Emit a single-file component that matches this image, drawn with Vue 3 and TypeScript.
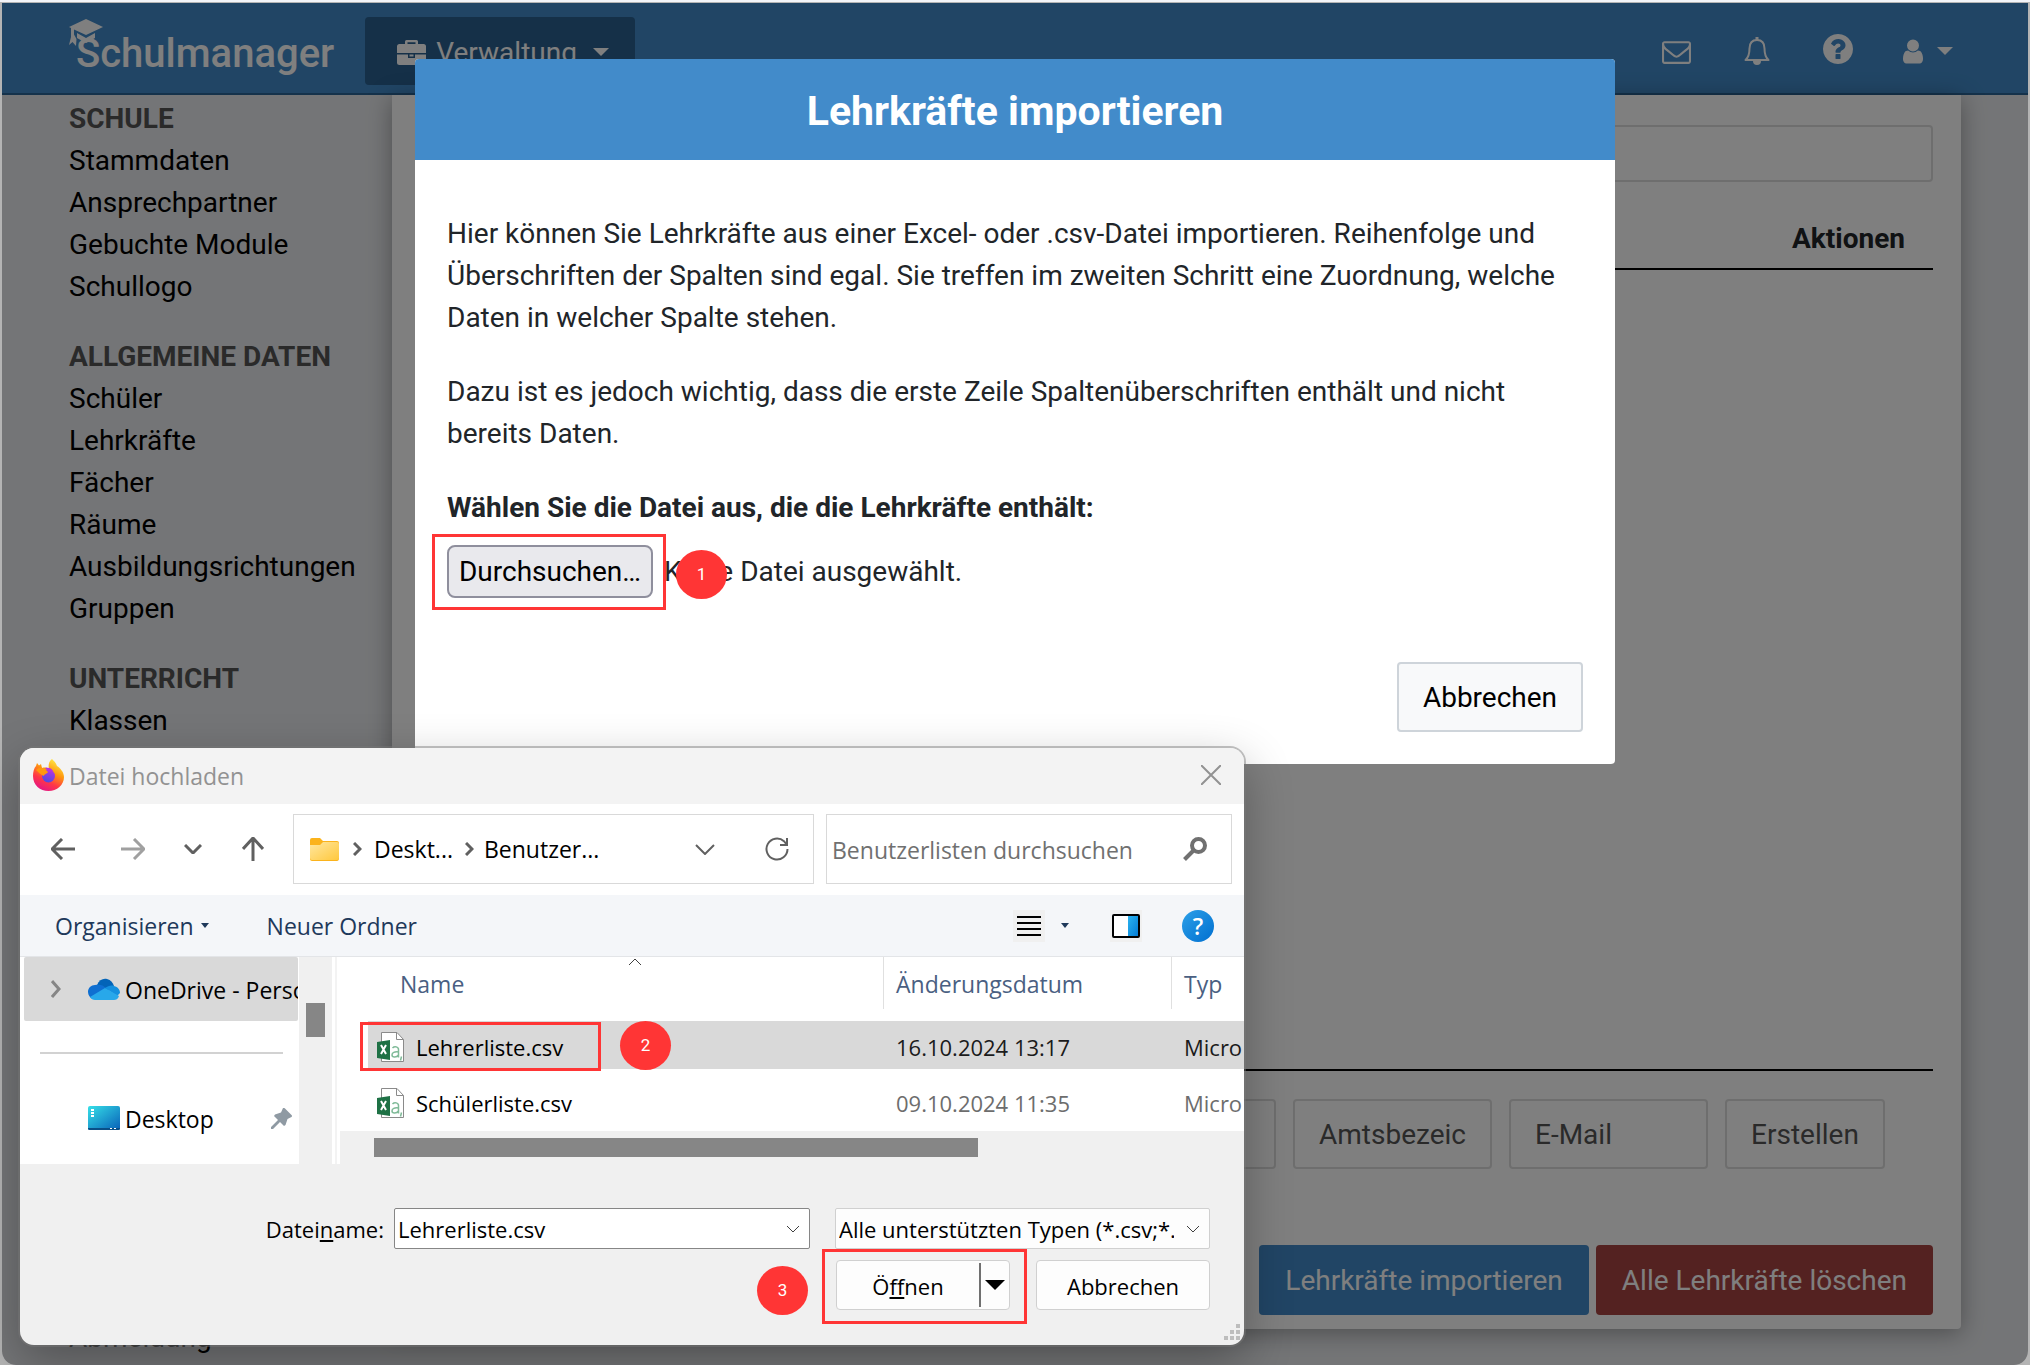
<script setup lang="ts">
import { ref } from 'vue'

interface NavGroup {
  title: string
  items: string[]
}

interface FileRow {
  name: string
  date: string
  type: string
}

const groups: NavGroup[] = [
  { title: 'SCHULE', items: ['Stammdaten', 'Ansprechpartner', 'Gebuchte Module', 'Schullogo'] },
  {
    title: 'ALLGEMEINE DATEN',
    items: ['Schüler', 'Lehrkräfte', 'Fächer', 'Räume', 'Ausbildungsrichtungen', 'Gruppen'],
  },
  { title: 'UNTERRICHT', items: ['Klassen'] },
]

const files: FileRow[] = [
  { name: 'Lehrerliste.csv', date: '16.10.2024 13:17', type: 'Micro' },
  { name: 'Schülerliste.csv', date: '09.10.2024 11:35', type: 'Micro' },
]

const selected = ref<string>('Lehrerliste.csv')
const filePicker = ref<HTMLInputElement | null>(null)
</script>

<template>
  <div class="frame">
    <div class="app">
      <header class="topbar">
        <a class="logo" href="#">
          <svg class="cap" viewBox="0 0 34 28" aria-hidden="true">
            <path d="M17 0 34 8 17 16 5 10.500v5l2.500 4.500L7 27l-3.500-4L0 26l2-8V9L0 8z" />
            <path d="M8 14l9 5 9-5v5l-9 5-9-5z" />
          </svg>
          <span>Schulmanager</span>
        </a>
        <button class="menu" type="button">
          <svg width="29" height="25" viewBox="0 0 29 25" aria-hidden="true">
            <path
              fill-rule="evenodd"
              d="M8 4V1.500Q8 0 9.500 0h10Q21 0 21 1.500V4h5.500Q29 4 29 6.500V13H0V6.500Q0 4 2.500 4zM10.500 4h8V2.200h-8zM0 14.500h11V18h7v-3.500h11v8Q29 25 26.500 25h-24Q0 25 0 22.500zM12.500 14.500h4v2h-4z"
            />
          </svg>
          <span>Verwaltung</span>
          <svg class="caret" width="16" height="8" viewBox="0 0 16 8" aria-hidden="true">
            <path d="M0 0h16L8 8z" />
          </svg>
        </button>
        <nav class="tools" aria-label="Konto">
          <a href="#" aria-label="Nachrichten">
            <svg width="29" height="29" viewBox="0 0 1792 1792">
              <path
                d="M1664 1504v-768q-32 36-69 66-268 206-426 338-51 43-83 67t-86.500 48.500-102.500 24.500h-2q-48 0-102.500-24.500t-86.500-48.500-83-67q-158-132-426-338-37-30-69-66v768q0 13 9.500 22.500t22.500 9.500h1472q13 0 22.500-9.500t9.500-22.500zm0-1051v-24.500l-.5-13-3-12.500-5.500-9-9-7.500-14-2.500h-1472q-13 0-22.500 9.500t-9.500 22.500q0 168 147 284 193 152 401 317 6 5 35 29.500t46 37.500 44.500 31.500 50.500 27.500 43 9h2q20 0 43-9t50.500-27.500 44.500-31.500 46-37.500 35-29.500q208-165 401-317 54-43 100.500-115.500t46.500-131.500zm128-37v1088q0 66-47 113t-113 47h-1472q-66 0-113-47t-47-113v-1088q0-66 47-113t113-47h1472q66 0 113 47t47 113z"
              />
            </svg>
          </a>
          <a href="#" aria-label="Benachrichtigungen">
            <svg width="26" height="28" viewBox="0 0 26 28">
              <path
                d="M1.500 23C5 20 5.500 15.500 5.500 11.500 5.500 6 8.500 3 13 3s7.500 3 7.500 8.500c0 4 .5 8.500 4 11.500z"
                fill="none"
                stroke="#fff"
                stroke-width="2"
                stroke-linejoin="round"
              />
              <path d="M9 24h8a4 4 0 0 1-8 0zM11.500 0h3v3h-3z" />
            </svg>
          </a>
          <a href="#" class="question" aria-label="Hilfe">
            <svg width="30" height="30" viewBox="128 128 1536 1536">
              <path
                d="M1024 1376v-192q0-14-9-23t-23-9h-192q-14 0-23 9t-9 23v192q0 14 9 23t23 9h192q14 0 23-9t9-23zm256-672q0-88-55.500-163t-138.500-116-170-41q-243 0-371 213-15 24 8 42l132 100q7 6 19 6 16 0 25-12 53-68 86-92 34-24 86-24 48 0 85.500 26t37.500 59q0 38-20 61t-68 45q-63 28-115.500 86.500t-52.500 125.500v36q0 14 9 23t23 9h192q14 0 23-9t9-23q0-19 21.500-49.500t54.500-49.500q32-18 49-28.500t46-35 44.500-48 28-60.500 12.500-81zm384 192q0 209-103 385.500t-279.500 279.500-385.500 103-385.500-103-279.500-279.500-103-385.500 103-385.500 279.500-279.500 385.500-103 385.500 103 279.500 279.500 103 385.500z"
              />
            </svg>
          </a>
          <a href="#" class="user" aria-label="Benutzer">
            <svg width="20" height="25" viewBox="256 128 1280 1536">
              <path
                d="M1536 1399q0 109-62.500 187t-150.500 78h-854q-88 0-150.500-78t-62.500-187q0-85 8.500-160.500t31.500-152 58.500-131 94-89 134.500-34.500q131 128 313 128t313-128q76 0 134.500 34.500t94 89 58.500 131 31.500 152 8.500 160.500zm-256-887q0 159-112.500 271.500t-271.500 112.500-271.500-112.500-112.500-271.500 112.500-271.500 271.500-112.500 271.500 112.500 112.500 271.500z"
              />
            </svg>
            <svg width="16" height="8" viewBox="0 0 16 8"><path d="M0 0h16L8 8z" /></svg>
          </a>
        </nav>
      </header>

      <div class="body">
        <nav class="sidebar" aria-label="Verwaltung">
          <section v-for="group in groups" :key="group.title">
            <h2>{{ group.title }}</h2>
            <a v-for="item in group.items" :key="item" href="#">{{ item }}</a>
          </section>
          <a class="logout" href="#">Abmeldung</a>
        </nav>

        <main class="panel">
          <input class="field search" type="text" aria-label="Suche" />
          <table class="teachers">
            <thead>
              <tr>
                <th scope="col">Aktionen</th>
              </tr>
            </thead>
          </table>
          <form class="create" @submit.prevent>
            <input class="field" type="text" aria-label="Name" />
            <input class="field" type="text" placeholder="Amtsbezeichnung" aria-label="Amtsbezeichnung" />
            <input class="field" type="email" placeholder="E-Mail" aria-label="E-Mail" />
            <button class="field" type="submit">Erstellen</button>
          </form>
          <div class="actions">
            <button class="primary" type="button">Lehrkräfte importieren</button>
            <button class="danger" type="button">Alle Lehrkräfte löschen</button>
          </div>
        </main>
      </div>

      <div class="overlay">
        <section class="modal" role="dialog" aria-labelledby="modal-title">
          <h1 id="modal-title">Lehrkräfte importieren</h1>
          <div class="modal-body">
            <p>
              Hier können Sie Lehrkräfte aus einer Excel- oder .csv-Datei importieren. Reihenfolge und
              Überschriften der Spalten sind egal. Sie treffen im zweiten Schritt eine Zuordnung, welche Daten in
              welcher Spalte stehen.
            </p>
            <p>
              Dazu ist es jedoch wichtig, dass die erste Zeile Spaltenüberschriften enthält und nicht bereits Daten.
            </p>
            <label class="file-label" for="upload">Wählen Sie die Datei aus, die die Lehrkräfte enthält:</label>
            <div class="file">
              <input id="upload" ref="filePicker" type="file" accept=".csv" hidden />
              <div class="target target-browse">
                <button class="browse" type="button" @click="filePicker?.click()">Durchsuchen…</button>
                <span class="ring"></span>
                <span class="step">1</span>
              </div>
              <span>Keine Datei ausgewählt.</span>
            </div>
            <div class="modal-foot">
              <button class="cancel" type="button">Abbrechen</button>
            </div>
          </div>
        </section>
      </div>
    </div>

    <section class="dialog" role="dialog" aria-labelledby="dialog-title">
      <header class="titlebar">
        <svg width="31" height="32" viewBox="0 0 31 32" aria-hidden="true">
          <defs>
            <linearGradient id="ffBody" x1="0.8" y1="0" x2="0.3" y2="1">
              <stop offset="0" stop-color="#fff44f" />
              <stop offset="0.4" stop-color="#ff980e" />
              <stop offset="0.7" stop-color="#ff3647" />
              <stop offset="1" stop-color="#e31587" />
            </linearGradient>
            <linearGradient id="ffGlobe" x1="0.7" y1="0" x2="0.3" y2="1">
              <stop offset="0" stop-color="#b833e1" />
              <stop offset="1" stop-color="#4a4be0" />
            </linearGradient>
          </defs>
          <path
            fill="url(#ffBody)"
            d="M19 0c2 2 4 4 5 7 3 2 7 6 7 11 0 8-7 14-15.500 14S0 26 0 17c0-4 1-8 3-10l1-3 2 2.500L8 5l1 4c4-1 6 0 7 1-1-4 0-8 3-10z"
          />
          <circle cx="15.500" cy="17" r="6.500" fill="url(#ffGlobe)" />
          <path fill="#ff980e" d="M3 11c3-3 7-3 10 0l2 2c-1 2-4 2-4 4-3-1-5-3-8-6z" />
          <path fill="#b833e1" d="M12 9c3-1 7 0 8 3l-4 1z" />
        </svg>
        <h2 id="dialog-title">Datei hochladen</h2>
        <button class="close" type="button" aria-label="Schließen">
          <svg width="20" height="20" viewBox="0 0 20 20"><path d="M0 0l20 20M20 0L0 20" /></svg>
        </button>
      </header>

      <div class="navrow">
        <button class="nav back" type="button" aria-label="Zurück">
          <svg width="24" height="22" viewBox="0 0 24 22"><path d="M11 1L1 11l10 10M1 11h23" /></svg>
        </button>
        <button class="nav forward" type="button" aria-label="Vorwärts">
          <svg width="24" height="22" viewBox="0 0 24 22"><path d="M13 1l10 10-10 10M23 11H0" /></svg>
        </button>
        <button class="nav" type="button" aria-label="Zuletzt besucht">
          <svg width="18" height="10" viewBox="0 0 18 10"><path d="M1 1l8 8 8-8" /></svg>
        </button>
        <button class="nav" type="button" aria-label="Nach oben">
          <svg width="22" height="24" viewBox="0 0 22 24"><path d="M1 12L11 1l10 11M11 1v23" /></svg>
        </button>
        <div class="address">
          <svg width="29" height="23" viewBox="0 0 29 23" aria-hidden="true">
            <defs>
              <linearGradient id="folder" x1="0" y1="0" x2="1" y2="1">
                <stop offset="0" stop-color="#ffe7a0" />
                <stop offset="1" stop-color="#ffc83d" />
              </linearGradient>
            </defs>
            <path fill="#fbb31c" d="M0 2Q0 0 2 0h8l3 3h14q2 0 2 2v15q0 3-2 3H2q-2 0-2-2z" />
            <path fill="url(#folder)" d="M0 7h10l3-3h14q2 0 2 2v14q0 2-2 2H2q-2 0-2-2z" />
          </svg>
          <svg class="sep" width="9" height="14" viewBox="0 0 9 14"><path d="M1 1l6 6-6 6" /></svg>
          <span>Deskt...</span>
          <svg class="sep" width="9" height="14" viewBox="0 0 9 14"><path d="M1 1l6 6-6 6" /></svg>
          <span>Benutzer...</span>
          <button class="drop" type="button" aria-label="Verlauf">
            <svg width="20" height="11" viewBox="0 0 20 11"><path d="M1 1l9 9 9-9" /></svg>
          </button>
          <button type="button" aria-label="Aktualisieren">
            <svg width="24" height="24" viewBox="0 0 24 24">
              <path d="M22.500 12A10.500 10.500 0 1 1 19 4.200L22 8M22 1v7h-7" />
            </svg>
          </button>
        </div>
        <div class="find">
          <input type="text" placeholder="Benutzerlisten durchsuchen" aria-label="Benutzerlisten durchsuchen" />
          <svg width="24" height="24" viewBox="0 0 24 24" aria-hidden="true">
            <circle cx="15.500" cy="8.500" r="6.500" fill="none" stroke="#707070" stroke-width="4" />
            <path d="M10.500 13.500L1.500 22.500" stroke="#707070" stroke-width="4" />
          </svg>
        </div>
      </div>

      <div class="toolbar">
        <button type="button">
          Organisieren
          <svg width="8" height="5" viewBox="0 0 8 5"><path d="M0 0h8L4 5z" fill="#1e395b" /></svg>
        </button>
        <button type="button">Neuer Ordner</button>
        <div class="views">
          <button type="button" class="tile" aria-label="Ansicht">
            <svg width="24" height="22" viewBox="0 0 24 22">
              <path d="M0 2h24M0 8h24M0 14h24M0 20h24" stroke="#000" stroke-width="2" />
            </svg>
          </button>
          <button type="button" class="more" aria-label="Weitere Ansichten">
            <svg width="8" height="5" viewBox="0 0 8 5"><path d="M0 0h8L4 5z" fill="#1e395b" /></svg>
          </button>
          <button type="button" class="tile" aria-label="Vorschau">
            <svg width="28" height="24" viewBox="0 0 28 24">
              <defs>
                <linearGradient id="pane" x1="0" y1="0" x2="1" y2="1">
                  <stop offset="0" stop-color="#2cb5f0" />
                  <stop offset="1" stop-color="#0078d4" />
                </linearGradient>
              </defs>
              <rect x="1" y="1" width="26" height="22" rx="1" fill="#fff" />
              <path d="M16 1h11v22H16z" fill="url(#pane)" />
              <rect x="1" y="1" width="26" height="22" rx="1" fill="none" stroke="#000" stroke-width="2" />
            </svg>
          </button>
          <button type="button" class="help" aria-label="Hilfe">?</button>
        </div>
      </div>

      <div class="panes">
        <nav class="tree" aria-label="Ordner">
          <a class="node active" href="#">
            <svg class="expand" width="10" height="18" viewBox="0 0 10 18"><path d="M1 1l7 8-7 8" /></svg>
            <svg width="32" height="22" viewBox="0 0 32 22">
              <path fill="#0364b8" d="M9 7C11 2 15 0 19 1c4 1 6 4 7 7l-7 6z" />
              <path fill="#0f6fd1" d="M7 7c5-1 8 0 11 3l-8 10-5 1C2 20 0 17 0 14c0-4 3-7 7-7z" />
              <path fill="#1490df" d="M17 10c3-2 6-3 9-2 4 1 6 4 6 7l-3 3z" />
              <path fill="#28a8ea" d="M2 19l15-9 14 8c-1 3-3 4-5 4H7c-2 0-4-1-5-3z" />
            </svg>
            <span>OneDrive - Personal</span>
          </a>
          <hr />
          <a class="node" href="#">
            <svg class="screen" width="32" height="24" viewBox="0 0 32 24">
              <defs>
                <linearGradient id="desk" x1="0" y1="0" x2="1" y2="1">
                  <stop offset="0" stop-color="#36e0e8" />
                  <stop offset="1" stop-color="#0860b8" />
                </linearGradient>
              </defs>
              <rect width="32" height="24" rx="2" fill="url(#desk)" />
              <path d="M0 22h32v1q0 1-2 1H2q-2 0-2-1z" fill="#0a4f86" />
              <path d="M3 3h3v2H3zM3 6h3v2H3zM3 9h3v2H3zM22 22h2v1h-2zM26 22h2v1h-2z" fill="#fff" />
            </svg>
            <span>Desktop</span>
            <svg class="pin" width="21" height="21" viewBox="0 0 21 21">
              <path
                fill="#8f9aa3"
                d="M12 0q1-.5 2 .5l6.500 6.500q1 1 0 2l-4 2-2 6-1.500 1-4-4L2 21H0v-2l7-7-4-4 1-1.500 6-2z"
              />
            </svg>
          </a>
        </nav>
        <div class="vscroll"><span></span></div>
        <div class="list">
          <svg class="sort" width="14" height="8" viewBox="0 0 14 8"><path d="M1 7l6-6 6 6" /></svg>
          <table>
            <thead>
              <tr>
                <th scope="col" class="col-name"><span>Name</span></th>
                <th scope="col" class="col-date"><span>Änderungsdatum</span></th>
                <th scope="col"><span>Typ</span></th>
              </tr>
            </thead>
            <tbody>
              <tr
                v-for="(file, index) in files"
                :key="file.name"
                :class="{ selected: file.name === selected }"
                @click="selected = file.name"
              >
                <td class="name">
                  <div class="entry">
                    <svg width="27" height="30" viewBox="0 0 27 30" aria-hidden="true">
                      <path d="M4.500.5H20l6.500 7v22h-22z" fill="#fff" stroke="#8a8a8a" />
                      <path d="M19.500.5v7h7" fill="none" stroke="#8a8a8a" />
                      <path d="M0 10l13-2v20L0 26z" fill="#1e7145" />
                      <path d="M4 13l5 9M9 13l-5 9" stroke="#fff" stroke-width="2" />
                      <path
                        d="M15.500 16c2-2 6-1.500 6 1.500v8M21.500 20c-4-.5-6.500.5-6.500 3s4.500 3 6.500 0M24.500 24.500l-1 4"
                        fill="none"
                        stroke="#7fba98"
                        stroke-width="1.500"
                      />
                    </svg>
                    <span>{{ file.name }}</span>
                  </div>
                  <template v-if="index === 0">
                    <span class="ring"></span>
                    <span class="step">2</span>
                  </template>
                </td>
                <td>{{ file.date }}</td>
                <td>{{ file.type }}</td>
              </tr>
            </tbody>
          </table>
          <div class="hscroll"><span></span></div>
        </div>
      </div>

      <form class="bottom" @submit.prevent>
        <div class="line">
          <label for="filename">Datei<u>n</u>ame:</label>
          <div class="combo filename">
            <input id="filename" v-model="selected" type="text" />
            <svg width="14" height="8" viewBox="0 0 14 8"><path d="M1 1l6 6 6-6" /></svg>
          </div>
          <div class="combo types">
            <select aria-label="Dateityp">
              <option>Alle unterstützten Typen (*.csv;*.xlsx)</option>
            </select>
            <svg width="14" height="8" viewBox="0 0 14 8"><path d="M1 1l6 6 6-6" /></svg>
          </div>
        </div>
        <div class="line">
          <div class="target target-open">
            <div class="split">
              <button type="submit">Ö<u>f</u>fnen</button>
              <button type="button" class="arrow" aria-label="Weitere Optionen">
                <svg width="20" height="10" viewBox="0 0 20 10"><path d="M0 0h20L10 10z" /></svg>
              </button>
            </div>
            <span class="ring"></span>
            <span class="step">3</span>
          </div>
          <button class="abort" type="button">Abbrechen</button>
        </div>
        <svg class="grip" width="17" height="17" viewBox="0 0 17 17" aria-hidden="true">
          <path d="M13 0h4v4h-4zM13 6h4v4h-4zM7 6h4v4H7zM13 12h4v4h-4zM7 12h4v4H7zM1 12h4v4H1z" />
        </svg>
      </form>
    </section>
  </div>
</template>

<style>
body {
  margin: 0;
}
</style>

<style scoped>
* {
  box-sizing: border-box;
}

a {
  color: inherit;
  text-decoration: none;
}

svg {
  flex: none;
}

button,
input,
select {
  font: inherit;
  color: inherit;
}

button {
  padding: 0;
  border: 0;
  background: none;
  cursor: pointer;
}

.frame {
  position: relative;
  display: flex;
  min-height: 100vh;
  padding: 3px 2px 0;
  background: linear-gradient(#f3f4f9 2px, #b4b4b4 2px);
  font-family: Roboto, 'Liberation Sans', sans-serif;
  font-size: 28px;
  line-height: 42px;
}

.app {
  position: relative;
  display: flex;
  flex: 1;
  flex-direction: column;
  min-width: 0;
  overflow: hidden;
  border-radius: 0 0 14px 14px;
  background: #e9ebee;
}

.topbar {
  display: flex;
  align-items: center;
  height: 92px;
  padding: 0 75px 0 67px;
  border-bottom: 2px solid #2a6496;
  background: #428bca;
  color: #fff;
}

.topbar svg {
  fill: #fff;
}

.logo {
  position: relative;
  padding: 12px 0 0 7px;
  font-size: 40px;
  font-weight: 500;
}

.cap {
  position: absolute;
  top: -2px;
  left: 0;
  width: 34px;
  height: 28px;
}

.menu {
  display: flex;
  align-items: center;
  width: 270px;
  height: 68px;
  margin: 6px auto 0 31px;
  padding: 2px 0 0 32px;
  border-radius: 4px;
  background: #2a6090;
}

.menu span {
  margin: 2px 16px 0 10px;
}

.tools {
  display: flex;
  align-items: center;
  gap: 53px;
  padding-top: 6px;
}

.tools a {
  display: flex;
  align-items: center;
}

.tools .question {
  margin: 0 -3px 4px 0;
}

.tools .user {
  gap: 14px;
}

.body {
  display: flex;
  flex: 1;
}

.sidebar {
  display: flex;
  flex: 0 0 390px;
  flex-direction: column;
  gap: 28px;
  padding: 3px 0 6px 67px;
  color: #000;
}

.sidebar h2 {
  margin: 0;
  color: #555;
  font-size: 28px;
  font-weight: 700;
}

.sidebar a {
  display: block;
}

.sidebar .logout {
  margin-top: auto;
}

.panel {
  display: flex;
  flex: 1;
  flex-direction: column;
  min-width: 0;
  margin: 0 67px 36px 0;
  padding: 30px 28px 14px;
  border-radius: 0 0 4px 4px;
  background: #fff;
  box-shadow: 0 4px 24px rgba(0, 0, 0, 0.35);
  color: #212529;
}

.field {
  width: 199px;
  height: 70px;
  padding: 0 24px;
  border: 2px solid #dcdcdc;
  border-radius: 4px;
  background: #fff;
  color: #555;
}

.field::placeholder {
  color: #555;
  opacity: 1;
}

.search {
  width: 100%;
  height: 57px;
}

.teachers {
  width: 100%;
  margin-top: 25px;
  border-collapse: collapse;
}

.teachers th {
  height: 62px;
  padding: 2px 28px 0 0;
  border-bottom: 2px solid #000;
  text-align: right;
}

.create {
  display: flex;
  justify-content: flex-end;
  gap: 17px;
  margin-top: auto;
  padding: 28px 48px 0 0;
  border-top: 2px solid #000;
}

.create button {
  width: 160px;
  padding: 2px 0 0;
}

.actions {
  display: flex;
  justify-content: flex-end;
  gap: 7px;
  margin-top: 76px;
}

.actions button {
  height: 70px;
  padding: 2px 26px 0;
  border-radius: 4px;
  color: #fff;
}

.primary {
  background: #428bca;
}

.danger {
  background: #a94442;
}

.overlay {
  position: absolute;
  inset: 0;
  display: flex;
  align-items: flex-start;
  justify-content: center;
  padding-top: 56px;
  background: rgba(0, 0, 0, 0.5);
}

.modal {
  width: 1200px;
  overflow: hidden;
  border-radius: 4px;
  background: #fff;
  color: #212529;
}

.modal h1 {
  margin: 0;
  padding: 28px 0 25px;
  background: #428bca;
  color: #fff;
  font-size: 41px;
  font-weight: 700;
  line-height: 48px;
  text-align: center;
}

.modal-body {
  padding: 53px 32px 32px;
}

.modal p {
  margin: 0 0 32px;
}

.file-label {
  display: block;
  font-weight: 700;
}

.file {
  display: flex;
  align-items: center;
  gap: 11px;
  margin-top: 16px;
}

.target {
  position: relative;
}

.browse {
  display: block;
  width: 206px;
  height: 53px;
  border: 2px solid #8f8f9d;
  border-radius: 8px;
  background: #e9e9ed;
  color: #000;
}

.ring {
  position: absolute;
  border: 3px solid #ff3535;
  pointer-events: none;
}

.step {
  position: absolute;
  display: flex;
  align-items: center;
  justify-content: center;
  width: 51px;
  height: 49px;
  padding-bottom: 2px;
  border-radius: 50%;
  background: #ff3535;
  color: #fff;
  font-family: Roboto, sans-serif;
  font-size: 17px;
}

.target-browse .ring {
  inset: -11px -13px -12px -15px;
}

.target-browse .step {
  top: 5px;
  left: 229px;
}

.modal-foot {
  display: flex;
  justify-content: flex-end;
  margin-top: 64px;
}

.cancel {
  width: 186px;
  height: 70px;
  padding-top: 2px;
  border: 2px solid #ced4da;
  border-radius: 4px;
  background: #f8f9fa;
  color: #000;
}

.dialog {
  position: absolute;
  top: 748px;
  left: 20px;
  width: 1224px;
  overflow: hidden;
  border-radius: 14px;
  background: #f0f0f0;
  box-shadow:
    0 0 0 2px rgba(120, 120, 120, 0.45),
    0 16px 48px rgba(0, 0, 0, 0.3);
  color: #000;
  font-family: 'Open Sans', 'Noto Sans', sans-serif;
  font-size: 23px;
  line-height: 32px;
}

.titlebar {
  display: flex;
  align-items: center;
  height: 56px;
  padding: 0 23px 2px 13px;
  background: #f3f3f3;
}

.titlebar h2 {
  margin: 2px auto 0 5px;
  color: #929292;
  font-size: 23px;
  font-weight: 400;
}

.close {
  display: flex;
}

.close path {
  fill: none;
  stroke: #929292;
  stroke-width: 2;
}

.navrow {
  display: flex;
  align-items: center;
  height: 91px;
  padding: 0 12px 1px 13px;
  background: #fff;
}

.nav {
  display: flex;
  justify-content: center;
  width: 60px;
}

.nav path,
.address button path {
  fill: none;
  stroke: #606060;
  stroke-width: 2;
}

.nav path {
  stroke-width: 3;
}

.back {
  margin-right: 10px;
}

.forward path {
  stroke: #a0a0a0;
}

.address,
.find {
  display: flex;
  align-items: center;
  height: 70px;
  border: 1px solid #d9d9d9;
}

.address {
  flex: 1;
  margin: 0 12px 0 10px;
  padding: 0 24px 0 16px;
}

.address .sep {
  margin: 0 12px 0 14px;
  fill: none;
  stroke: #606060;
  stroke-width: 3;
}

.address span + .sep {
  margin: 0 10px 0 12px;
}

.address button {
  display: flex;
}

.address .drop {
  margin: 0 50px 0 auto;
}

.find {
  width: 406px;
  padding: 0 24px 0 5px;
}

.find input {
  flex: 1;
  min-width: 0;
  padding: 2px 0 0;
  border: 0;
  outline: 0;
}

.find input::placeholder {
  color: #707070;
  opacity: 1;
}

.toolbar {
  display: flex;
  align-items: center;
  height: 62px;
  padding: 0 30px 0 35px;
  border-bottom: 1px solid #e3e5e8;
  background: #f4f6f9;
  color: #1e395b;
}

.toolbar > button {
  display: flex;
  align-items: center;
  gap: 7px;
  margin-right: 58px;
}

.views {
  display: flex;
  align-items: center;
  margin-left: auto;
}

.tile {
  display: flex;
  align-items: center;
  justify-content: center;
  width: 32px;
  height: 32px;
  background: #f0f0f0;
}

.more {
  display: flex;
  margin: 0 41px 0 16px;
}

.help {
  width: 32px;
  height: 32px;
  margin-left: 40px;
  border-radius: 50%;
  background: linear-gradient(135deg, #2ca0e8, #006fd0);
  color: #fff;
  font-weight: 600;
}

.panes {
  display: flex;
  height: 207px;
  background: #fff;
}

.tree {
  width: 278px;
  padding-left: 4px;
}

.node {
  display: flex;
  align-items: center;
  height: 64px;
  padding-left: 64px;
  overflow: hidden;
  white-space: nowrap;
}

.node.active {
  padding-left: 27px;
  border-radius: 2px;
  background: #d9d9d9;
}

.node span {
  margin: 2px auto 0 5px;
}

.expand {
  margin-right: 27px;
  fill: none;
  stroke: #868686;
  stroke-width: 3;
}

.pin {
  margin-right: 6px;
}

.tree hr {
  height: 2px;
  margin: 31px 15px 32px 16px;
  border: 0;
  background: #d2d2d2;
}

.vscroll {
  width: 33px;
  margin: 0 3px 0 1px;
  padding: 46px 7px 0;
  background: #f0f0f0;
}

.vscroll span {
  display: block;
  height: 34px;
  background: #868686;
}

.list {
  position: relative;
  flex: 1;
  min-width: 0;
  border-left: 2px solid #f3f3f3;
}

.sort {
  position: absolute;
  top: 1px;
  left: 291px;
}

.sort path,
.combo path {
  fill: none;
  stroke: #404040;
}

.list table {
  width: calc(100% - 31px);
  margin-left: 31px;
  border-collapse: collapse;
  table-layout: fixed;
}

.list th,
.list td {
  padding: 0;
  text-align: left;
  white-space: nowrap;
}

.list th {
  height: 64px;
  color: #4a5f82;
  font-weight: 400;
  vertical-align: top;
}

.list th span {
  display: block;
  height: 52px;
  padding-left: 12px;
  border-left: 1px solid #e0e0e0;
  line-height: 54px;
}

.list .col-name {
  width: 515px;
}

.list .col-name span {
  padding-left: 31px;
  border-left-color: transparent;
}

.list .col-date {
  width: 288px;
}

.list td {
  height: 62px;
  padding: 6px 0 0 13px;
  color: #6d6d6d;
  font-size: 22px;
}

.list .selected td {
  height: 48px;
  padding-top: 4px;
  background: #d9d9d9;
  color: #1b1b1b;
}

.list .name,
.list .selected .name {
  position: relative;
  padding-left: 9px;
  color: #000;
}

.entry {
  display: flex;
  align-items: center;
  gap: 12px;
}

.name .ring {
  inset: 1px auto -2px -8px;
  width: 241px;
}

.name .step {
  top: 0;
  left: 252px;
}

.hscroll {
  height: 33px;
  margin-left: 3px;
  padding: 7px 0 7px 34px;
  background: #f0f0f0;
}

.hscroll span {
  display: block;
  width: 604px;
  height: 19px;
  background: #868686;
}

.bottom {
  position: relative;
  padding: 44px 34px 35px;
  font-size: 22px;
}

.line {
  display: flex;
  align-items: center;
  justify-content: flex-end;
}

.line + .line {
  margin-top: 11px;
}

.combo {
  display: flex;
  align-items: center;
  border-radius: 2px;
}

.combo input,
.combo select {
  flex: 1;
  min-width: 0;
  height: 100%;
  padding: 0 0 0 3px;
  border: 0;
  outline: 0;
  appearance: none;
  background: transparent;
}

.filename {
  width: 416px;
  height: 41px;
  margin: 0 25px 0 10px;
  padding-right: 9px;
  border: 1px solid #868686;
  background: #fff;
}

.types {
  width: 375px;
  height: 41px;
  padding-right: 9px;
  border: 1px solid #d0d0d0;
  background: #fdfdfd;
}

.types svg,
.filename svg {
  margin-left: 12px;
}

.split,
.abort {
  width: 174px;
  height: 50px;
  border: 1px solid #d0d0d0;
  border-radius: 4px;
  background: #fdfdfd;
}

.abort,
.split button:first-child {
  padding-top: 2px;
}

.split {
  display: flex;
  align-items: center;
}

.split button:first-child {
  flex: 1;
}

.arrow {
  display: flex;
  align-items: center;
  justify-content: center;
  width: 30px;
  height: 44px;
  border-left: 2px solid #707070;
}

.target-open {
  margin-right: 26px;
}

.target-open .ring {
  inset: -11px -17px -14px -14px;
}

.target-open .step {
  top: 6px;
  left: -79px;
}

.grip {
  position: absolute;
  right: 4px;
  bottom: 4px;
  fill: #bdbdbd;
}
</style>
